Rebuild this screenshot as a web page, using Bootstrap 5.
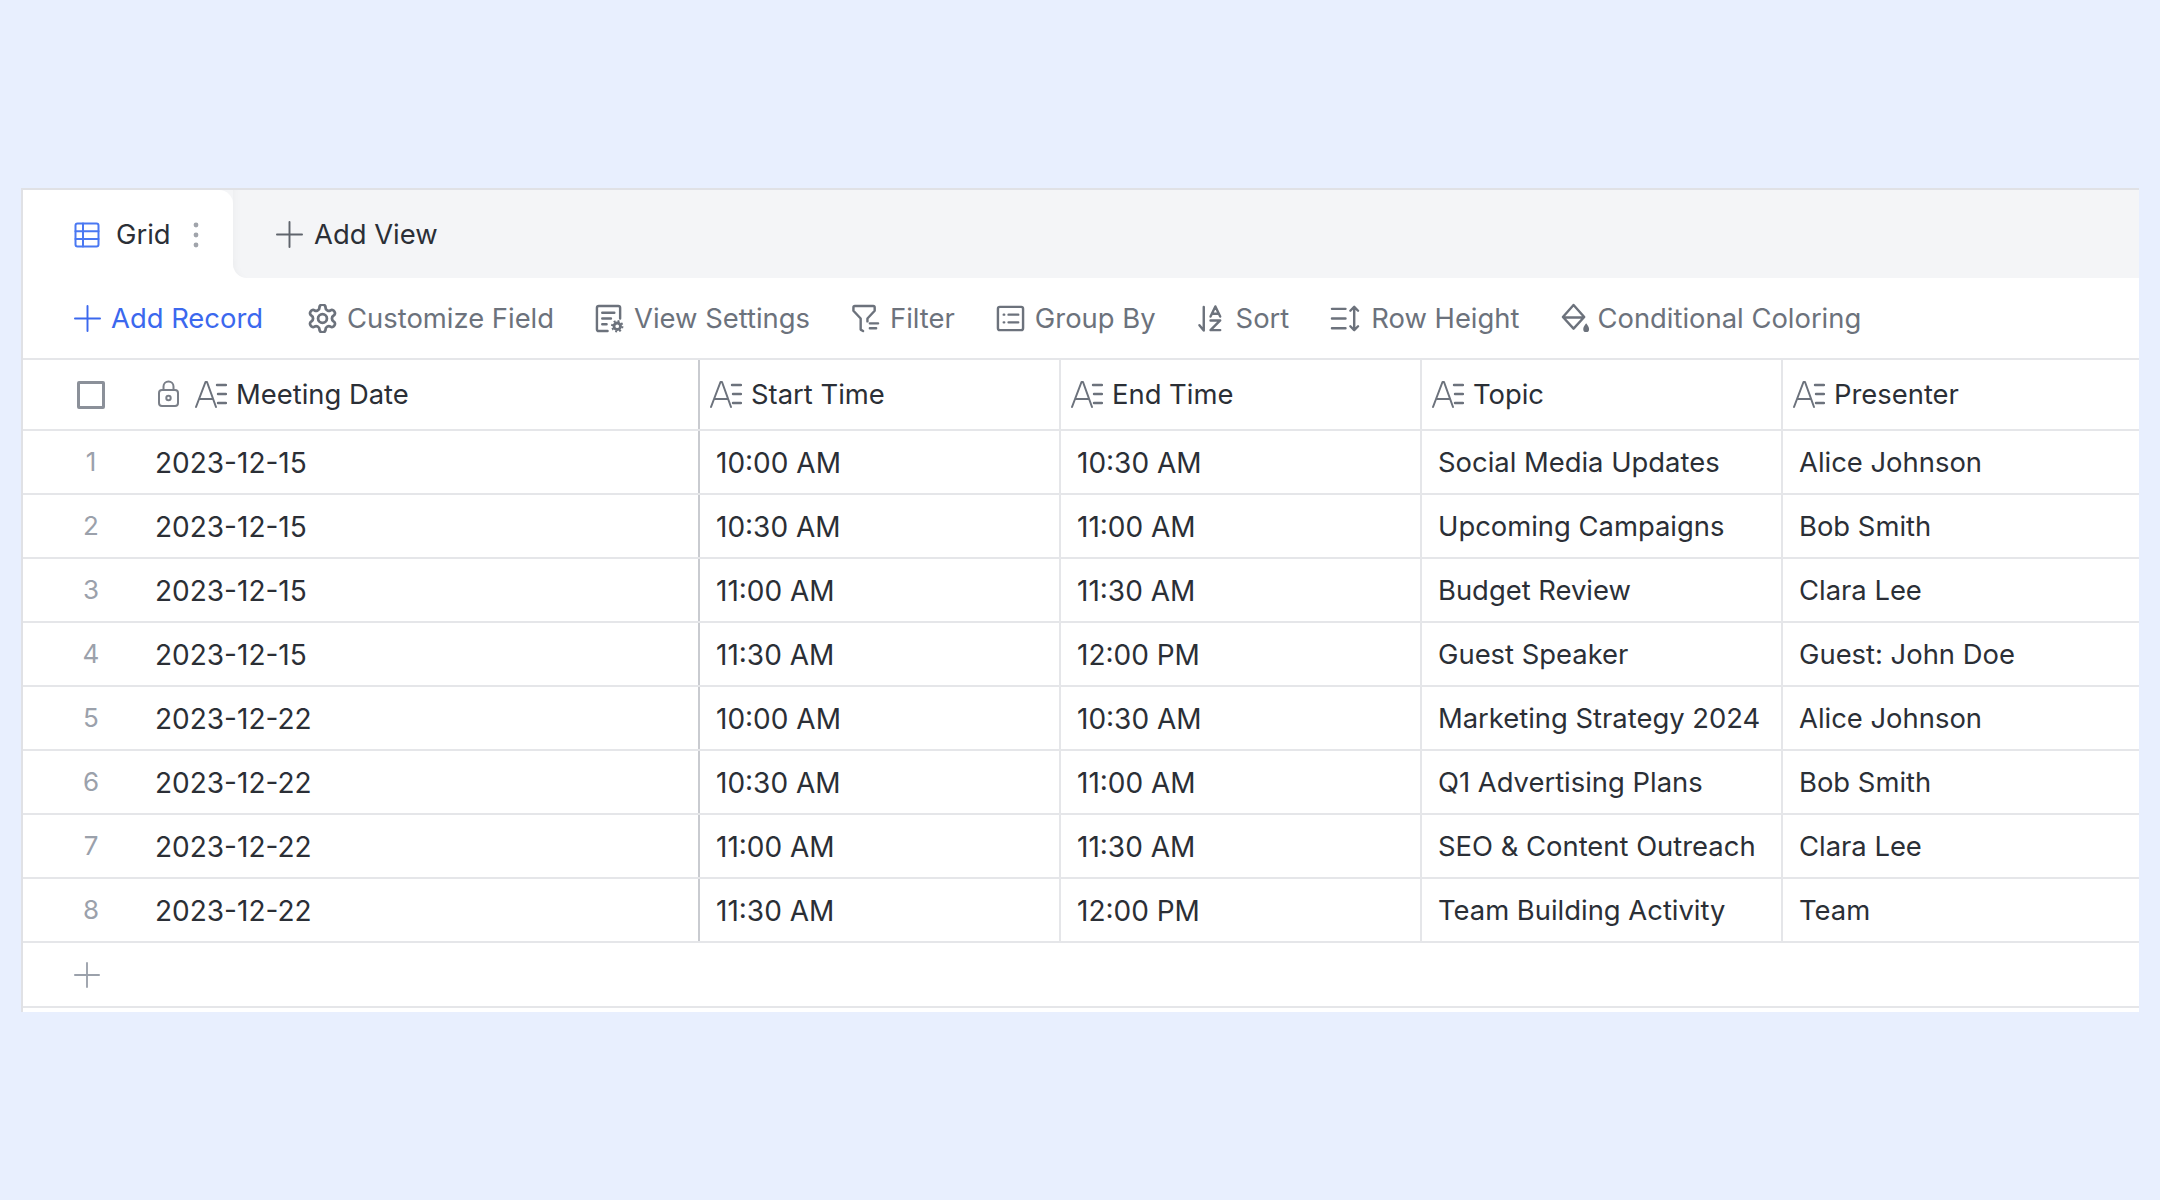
<!DOCTYPE html>
<html lang="en">

<head>
    <meta charset="UTF-8">
    <meta name="viewport" content="width=device-width, initial-scale=1.0">
    <title>Grid View</title>
    <link href="https://cdn.jsdelivr.net/npm/bootstrap@5.3.0/dist/css/bootstrap.min.css" rel="stylesheet">
    <style>
        body {
            background: #e8effe;
            font-family: Inter, "Liberation Sans", sans-serif;
            font-size: 27.4px;
            color: #2b2f36;
        }

        .page-wrap {
            padding: 188px 21px 0 21px;
        }

        .grid-panel {
            background: #fff;
            height: 824px;
            border-top: 2px solid #e0e1e5;
            border-left: 2px solid #e0e1e5;
        }

        .tab-bar {
            height: 88px;
            background: #f4f5f7;
        }

        .tab-active {
            width: 210px;
            background: #fff;
            border-top-right-radius: 14px;
            padding-left: 51px;
            padding-top: 1px;
        }

        .tab-rest {
            background: #fff;
        }

        .tab-add {
            height: 100%;
            padding: 1px 0 0 43px;
            gap: 11px;
            background: #f4f5f7;
            border-bottom-left-radius: 14px;
            box-shadow: inset 10px 0 10px -10px rgba(0, 0, 0, .05);
        }

        .tab-grid-icon {
            color: #4a78f2;
            stroke-width: 3;
            margin-right: 16px;
        }

        .tab-dots {
            margin-left: 22px;
        }

        .tab-plus {
            color: #5f646c;
        }

        .tool-bar {
            height: 82px;
            padding: 1px 0 0 51px;
            gap: 41px;
            color: #6c727c;
            border-bottom: 2px solid #e5e6e9;
        }

        .tool-blue {
            color: #3b68ee;
            margin-right: 4px;
        }

        .tool-item {
            gap: 10px;
        }

        .tool-tight {
            gap: 6px;
        }

        .ico {
            flex: none;
            fill: none;
            stroke: currentColor;
            stroke-width: 2;
            stroke-linecap: round;
            stroke-linejoin: round;
        }

        .ico-bold {
            stroke-width: 2.5;
        }

        .sheet {
            table-layout: fixed;
            width: 100%;
            margin: 0;
            --bs-table-color: #2b2f36;
            --bs-table-border-color: #e5e6e9;
        }

        .sheet th,
        .sheet td {
            height: 64px;
            padding: 2px 0 0 16px;
            vertical-align: middle;
            font-weight: 400;
            border-bottom: 2px solid #e5e6e9;
            border-left: 2px solid #e5e6e9;
            white-space: nowrap;
            overflow: hidden;
        }

        .sheet th {
            height: 70px;
            padding: 0 0 0 10px;
        }

        .sheet .cell-frozen {
            border-left: 0;
            padding-left: 0;
        }

        .sheet .cell-after {
            border-left-color: #c9cbd0;
        }

        .sheet .cell-nums {
            font-size: 28px;
        }

        .sheet .row-num,
        .sheet .cell-check {
            border-left: 0;
            padding: 0 0 0 4px;
            text-align: center;
        }

        .sheet .row-num {
            padding-bottom: 2px;
            color: #9ba1ab;
            font-size: 26px;
        }

        .head-cell {
            gap: 9px;
        }

        .head-icon {
            color: #6c727c;
        }

        .lock-icon {
            margin: 0 15px 0 2px;
            color: #7a7f88;
        }

        .check-box {
            width: 28px;
            height: 28px;
            border: 3px solid #8b9099;
            border-radius: 2px;
            margin: 0 auto;
        }

        .add-row {
            height: 65px;
            padding-left: 51px;
            border-bottom: 2px solid #e5e6e9;
            color: #9ba1ab;
        }
    </style>
</head>

<body>
    <svg width="0" height="0" class="position-absolute">
        <symbol id="i-plus" viewBox="0 0 28 28"><path d="M14 1v26M1 14h26"/></symbol>
        <symbol id="i-type" viewBox="0 0 32 32"><path d="M1 29 10.5 4h1.5l9 25M5 21h13"/><path stroke-width="2.4" d="M22 7h9M23 16h8M23 25h8"/></symbol>
    </svg>

    <div class="page-wrap">
        <div class="grid-panel overflow-hidden">
            <div class="tab-bar d-flex">
                <div class="tab-active d-flex align-items-center">
                    <svg class="ico tab-grid-icon" width="26" height="26" viewBox="0 0 26 26">
                        <rect x="1.5" y="1.5" width="23" height="23" rx="2"/>
                        <path d="M9 1.5v23M1.5 9.300h23M1.500 17h23"/>
                    </svg>
                    <span>Grid</span>
                    <svg class="tab-dots" width="6" height="28" viewBox="0 0 6 28" fill="#a0a4ab">
                        <circle cx="3" cy="4" r="2.4"/><circle cx="3" cy="14" r="2.4"/><circle cx="3" cy="24" r="2.4"/>
                    </svg>
                </div>
                <div class="tab-rest flex-grow-1">
                    <div class="tab-add d-flex align-items-center">
                        <svg class="ico tab-plus" width="27" height="27"><use href="#i-plus"/></svg>
                        <span>Add View</span>
                    </div>
                </div>
            </div>

            <div class="tool-bar d-flex align-items-center">
                <div class="tool-item tool-blue d-flex align-items-center">
                    <svg class="ico" width="27" height="27"><use href="#i-plus"/></svg>
                    <span>Add Record</span>
                </div>
                <div class="tool-item d-flex align-items-center">
                    <svg class="ico" width="29" height="29" viewBox="1.5 1.5 21 21" stroke-width="1.6">
                        <path d="M12.22 2h-.44a2 2 0 0 0-2 2v.18a2 2 0 0 1-1 1.73l-.43.25a2 2 0 0 1-2 0l-.15-.08a2 2 0 0 0-2.73.73l-.22.38a2 2 0 0 0 .73 2.73l.15.1a2 2 0 0 1 1 1.72v.51a2 2 0 0 1-1 1.74l-.15.09a2 2 0 0 0-.73 2.73l.22.38a2 2 0 0 0 2.73.73l.15-.08a2 2 0 0 1 2 0l.43.25a2 2 0 0 1 1 1.73V20a2 2 0 0 0 2 2h.44a2 2 0 0 0 2-2v-.18a2 2 0 0 1 1-1.73l.43-.25a2 2 0 0 1 2 0l.15.08a2 2 0 0 0 2.73-.73l.22-.39a2 2 0 0 0-.73-2.73l-.15-.08a2 2 0 0 1-1-1.74v-.5a2 2 0 0 1 1-1.74l.15-.09a2 2 0 0 0 .73-2.73l-.22-.38a2 2 0 0 0-2.73-.73l-.15.08a2 2 0 0 1-2 0l-.43-.25a2 2 0 0 1-1-1.73V4a2 2 0 0 0-2-2z"/>
                        <circle cx="12" cy="12" r="3.2"/>
                    </svg>
                    <span>Customize Field</span>
                </div>
                <div class="tool-item d-flex align-items-center">
                    <svg class="ico ico-bold" width="29" height="29" viewBox="0 0 30 30">
                        <path d="M13 28H4a2 2 0 0 1-2-2V4a2 2 0 0 1 2-2h20a2 2 0 0 1 2 2v11M7.500 9H20M7.500 15h9M7.500 21H12"/>
                        <circle cx="23" cy="23" r="3.4" stroke-width="3"/>
                        <circle cx="23" cy="23" r="5.4" stroke-width="2" stroke-dasharray="2 2.2" stroke-linecap="butt"/>
                    </svg>
                    <span>View Settings</span>
                </div>
                <div class="tool-item d-flex align-items-center">
                    <svg class="ico ico-bold" width="29" height="29" viewBox="0 0 30 30">
                        <path d="M4 2h19a1.500 1.500 0 0 1 1.500 1.500V7L17 15v3M4 2a1.500 1.500 0 0 0-1.500 1.500V7L10 15v11.500l2.500 1.500"/>
                        <path d="M19.500 20H28M19.500 25H26"/>
                    </svg>
                    <span>Filter</span>
                </div>
                <div class="tool-item d-flex align-items-center">
                    <svg class="ico ico-bold" width="29" height="29" viewBox="0 0 30 30">
                        <rect x="2" y="3" width="26" height="24" rx="2"/>
                        <path d="M8 11h.5M8 19h.5M13 11h10M13 19h10"/>
                    </svg>
                    <span>Group By</span>
                </div>
                <div class="tool-item d-flex align-items-center">
                    <svg class="ico ico-bold" width="29" height="29" viewBox="0 0 30 30">
                        <path d="M7 3v24.500L2.500 22"/>
                        <path d="M14 13l5-10.500 5 10.500M15.800 10h6.400M14 17h10L14 27h10"/>
                    </svg>
                    <span>Sort</span>
                </div>
                <div class="tool-item d-flex align-items-center">
                    <svg class="ico ico-bold" width="31" height="29" viewBox="0 0 32 30">
                        <path d="M2 5h14M2 15h14M2 25h14M25 3v24M21 7l4-4 4 4M21 23l4 4 4-4"/>
                    </svg>
                    <span>Row Height</span>
                </div>
                <div class="tool-item tool-tight d-flex align-items-center">
                    <svg class="ico ico-bold" width="31" height="31" viewBox="0 0 32 32">
                        <path d="M14 2 3 14.500l11 12 11-12zM3.500 15h21"/>
                        <path d="M27 21c-2 3-3 4-3 6a3 3 0 0 0 6 0c0-2-1-3-3-6z" fill="currentColor" stroke="none"/>
                    </svg>
                    <span>Conditional Coloring</span>
                </div>
            </div>

            <table class="table sheet">
                <colgroup>
                    <col style="width:132px">
                    <col style="width:544px">
                    <col style="width:361px">
                    <col style="width:361px">
                    <col style="width:361px">
                    <col>
                </colgroup>
                <thead>
                    <tr>
                        <th class="cell-check"><div class="check-box"></div></th>
                        <th class="cell-frozen">
                            <div class="d-flex align-items-center">
                                <svg class="ico lock-icon" width="23" height="28" viewBox="0 0 23 28" stroke-width="2.4">
                                    <rect x="2" y="10" width="19" height="16" rx="3"/>
                                    <path d="M6.500 10V6.500a5 5 0 0 1 10 0V10"/>
                                    <circle cx="11.500" cy="18" r="2.200"/>
                                </svg>
                                <div class="head-cell d-flex align-items-center">
                                    <svg class="ico head-icon" width="32" height="32"><use href="#i-type"/></svg>
                                    <span>Meeting Date</span>
                                </div>
                            </div>
                        </th>
                        <th class="cell-after">
                            <div class="head-cell d-flex align-items-center"><svg class="ico head-icon" width="32" height="32"><use href="#i-type"/></svg><span>Start Time</span></div>
                        </th>
                        <th>
                            <div class="head-cell d-flex align-items-center"><svg class="ico head-icon" width="32" height="32"><use href="#i-type"/></svg><span>End Time</span></div>
                        </th>
                        <th>
                            <div class="head-cell d-flex align-items-center"><svg class="ico head-icon" width="32" height="32"><use href="#i-type"/></svg><span>Topic</span></div>
                        </th>
                        <th>
                            <div class="head-cell d-flex align-items-center"><svg class="ico head-icon" width="32" height="32"><use href="#i-type"/></svg><span>Presenter</span></div>
                        </th>
                    </tr>
                </thead>
                <tbody id="rows"></tbody>
            </table>

            <div class="add-row d-flex align-items-center">
                <svg class="ico" width="26" height="26"><use href="#i-plus"/></svg>
            </div>
        </div>
    </div>

    <script src="https://cdn.jsdelivr.net/npm/bootstrap@5.3.0/dist/js/bootstrap.bundle.min.js"></script>
    <script>
        const records = [
            ["2023-12-15", "10:00 AM", "10:30 AM", "Social Media Updates", "Alice Johnson"],
            ["2023-12-15", "10:30 AM", "11:00 AM", "Upcoming Campaigns", "Bob Smith"],
            ["2023-12-15", "11:00 AM", "11:30 AM", "Budget Review", "Clara Lee"],
            ["2023-12-15", "11:30 AM", "12:00 PM", "Guest Speaker", "Guest: John Doe"],
            ["2023-12-22", "10:00 AM", "10:30 AM", "Marketing Strategy 2024", "Alice Johnson"],
            ["2023-12-22", "10:30 AM", "11:00 AM", "Q1 Advertising Plans", "Bob Smith"],
            ["2023-12-22", "11:00 AM", "11:30 AM", "SEO &amp; Content Outreach", "Clara Lee"],
            ["2023-12-22", "11:30 AM", "12:00 PM", "Team Building Activity", "Team"]
        ];
        let tbl = "";
        records.map((item, i) => {
            tbl += `
                <tr>
                    <td class="row-num">${i + 1}</td>
                    <td class="cell-frozen cell-nums">${item[0]}</td>
                    <td class="cell-after cell-nums">${item[1]}</td>
                    <td class="cell-nums">${item[2]}</td>
                    <td>${item[3]}</td>
                    <td>${item[4]}</td>
                </tr>`;
        });
        document.getElementById("rows").innerHTML = tbl;
    </script>
</body>

</html>
